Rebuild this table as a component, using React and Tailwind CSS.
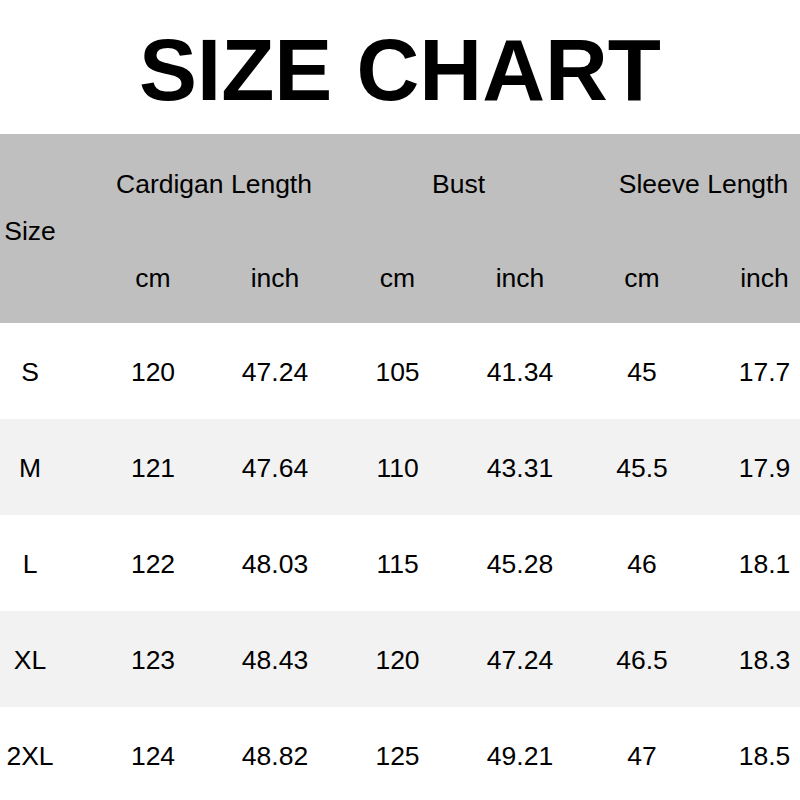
import React from "react";

const rows = [
  ["S", "120", "47.24", "105", "41.34", "45", "17.7"],
  ["M", "121", "47.64", "110", "43.31", "45.5", "17.9"],
  ["L", "122", "48.03", "115", "45.28", "46", "18.1"],
  ["XL", "123", "48.43", "120", "47.24", "46.5", "18.3"],
  ["2XL", "124", "48.82", "125", "49.21", "47", "18.5"],
];

const cols = "grid grid-cols-[92px_122px_122px_123px_122px_122px_123px]";

export default function App() {
  return (
    <div
      className="w-[800px] h-[800px] overflow-hidden bg-white text-black"
      style={{ fontFamily: '"Liberation Sans", Arial, sans-serif' }}
    >
      <div className="h-[134px] flex items-center justify-center">
        <h1 className="text-[87px] font-bold leading-none mt-[5px]">SIZE CHART</h1>
      </div>
      <div className="w-[826px]">
        <div className={`${cols} bg-[#bfbfbf] h-[189px] grid-rows-[95px_94px] text-[26.5px] pt-[3px]`}>
          <div className="row-span-2 flex items-center">
            <span className="w-[60px] text-center">Size</span>
          </div>
          <div className="col-span-2 flex items-center justify-center">Cardigan Length</div>
          <div className="col-span-2 flex items-center justify-center">Bust</div>
          <div className="col-span-2 flex items-center justify-center">Sleeve Length</div>
          <div className="flex items-center justify-center">cm</div>
          <div className="flex items-center justify-center">inch</div>
          <div className="flex items-center justify-center">cm</div>
          <div className="flex items-center justify-center">inch</div>
          <div className="flex items-center justify-center">cm</div>
          <div className="flex items-center justify-center">inch</div>
        </div>
        {rows.map((r, i) => (
          <div
            key={r[0]}
            className={`${cols} h-[96px] text-[26.5px] pt-[3px] ${i % 2 === 1 ? "bg-[#f2f2f2]" : "bg-white"}`}
          >
            <div className="flex items-center">
              <span className="w-[60px] text-center">{r[0]}</span>
            </div>
            {r.slice(1).map((v, j) => (
              <div key={j} className="flex items-center justify-center">
                {v}
              </div>
            ))}
          </div>
        ))}
      </div>
    </div>
  );
}
